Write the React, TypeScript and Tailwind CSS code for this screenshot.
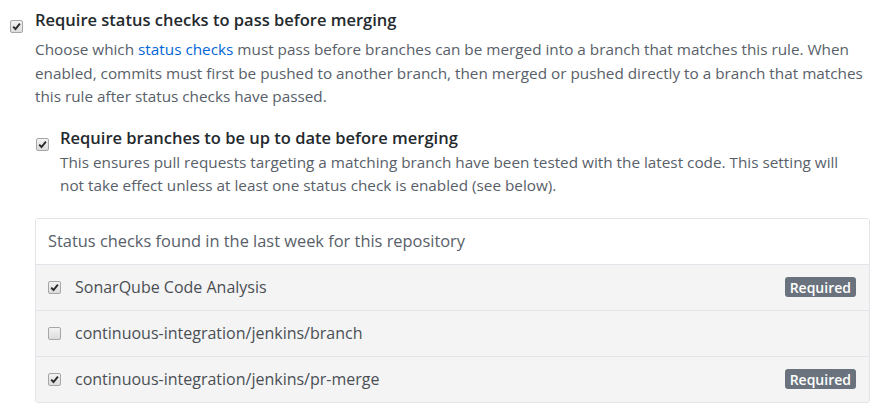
import React from 'react';

const Check = ({ checked }: { checked: boolean }) => (
  <span className="inline-flex items-center justify-center w-[13px] h-[13px] rounded-[2px] border border-[#a6a6a6] bg-gradient-to-b from-[#f3f3f3] to-[#dcdcdc] shrink-0">
    {checked && (
      <svg width="9" height="9" viewBox="0 0 9 9">
        <path d="M1.2 4.6 L3.5 7 L7.9 1.6" fill="none" stroke="#2b2b2b" strokeWidth="1.9" />
      </svg>
    )}
  </span>
);

const checks = [
  { name: 'SonarQube Code Analysis', on: true, required: true },
  { name: 'continuous-integration/jenkins/branch', on: false, required: false },
  { name: 'continuous-integration/jenkins/pr-merge', on: true, required: true },
];

export default function App() {
  return (
    <div className="w-[881px] h-[409px] bg-white pl-[10px] pr-[11px] pt-[8px] font-['Open_Sans','Noto_Sans',sans-serif] overflow-hidden">
      <div className="flex">
        <div className="w-[25px] pt-[5px]">
          <Check checked />
        </div>
        <div className="flex-1 min-w-0">
          <div className="text-[16.5px] leading-[24px] font-semibold text-[#24292e]">
            Require status checks to pass before merging
          </div>
          <p className="mt-[6px] text-[15.3px] leading-[23.5px] text-[#586069] whitespace-nowrap">
            Choose which <a className="text-[#0366d6]">status checks</a> must pass before branches can be merged into a branch that matches this rule. When
            <br />
            enabled, commits must first be pushed to another branch, then merged or pushed directly to a branch that matches
            <br />
            this rule after status checks have passed.
          </p>

          <div className="flex mt-[17px]">
            <div className="w-[25px] pt-[5px] pl-[1px]">
              <Check checked />
            </div>
            <div className="flex-1 min-w-0">
              <div className="text-[16.5px] leading-[24px] font-semibold text-[#24292e]">
                Require branches to be up to date before merging
              </div>
              <p className="mt-[1px] text-[15.3px] leading-[23.5px] text-[#586069] whitespace-nowrap">
                This ensures pull requests targeting a matching branch have been tested with the latest code. This setting will
                <br />
                not take effect unless at least one status check is enabled (see below).
              </p>
            </div>
          </div>

          <div className="mt-[20px] border border-[#e1e4e8] rounded-[3px] overflow-hidden">
            <div className="h-[45px] flex items-center px-[12px] bg-white text-[16.4px] text-[#586069]">
              Status checks found in the last week for this repository
            </div>
            {checks.map((c) => (
              <div key={c.name} className="h-[46px] flex items-center border-t border-[#e1e4e8] bg-[#f4f4f4] pl-[12px] pr-[13px]">
                <Check checked={c.on} />
                <span className="ml-[14px] flex-1 text-[16px] font-medium text-[#4a4f55]">{c.name}</span>
                {c.required && (
                  <span className="h-[20px] px-[5px] flex items-center rounded-[3px] bg-[#6a737d] text-white text-[14px] font-semibold">
                    Required
                  </span>
                )}
              </div>
            ))}
          </div>
        </div>
      </div>
    </div>
  );
}
